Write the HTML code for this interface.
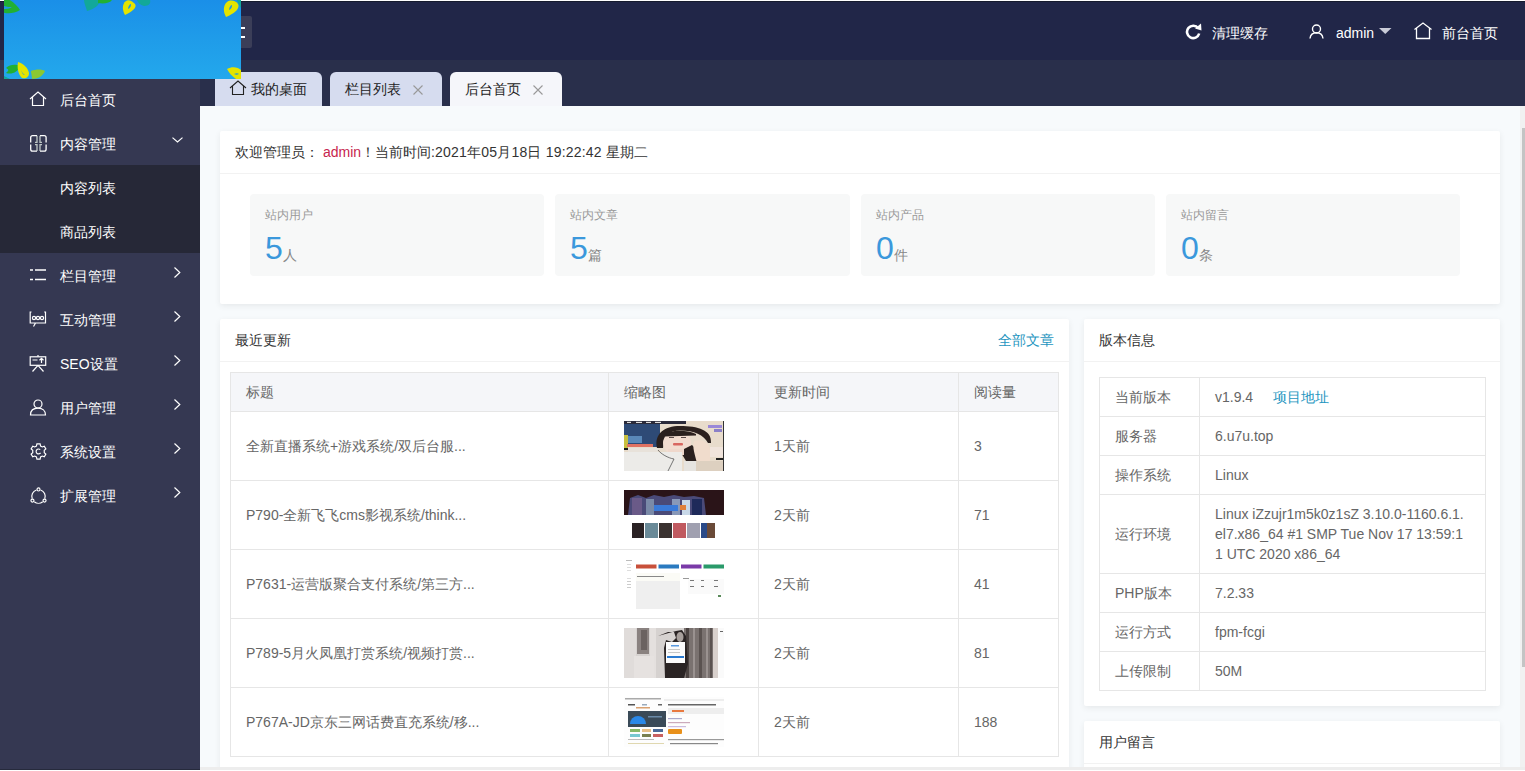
<!DOCTYPE html>
<html><head><meta charset="utf-8">
<style>
*{margin:0;padding:0;box-sizing:border-box}
html,body{width:1525px;height:771px;overflow:hidden;font-family:"Liberation Sans",sans-serif;font-size:14px;color:#333;background:#f7fafc;position:relative}
.abs{position:absolute}
#header{left:0;top:0;width:1525px;height:60px;background:#212648}
#topline{left:0;top:0;width:1525px;height:1px;background:#fff}
#topline2{left:0;top:1px;width:1525px;height:1px;background:#161b2e}
#tabbar{left:200px;top:60px;width:1325px;height:46px;background:#292f4b}
#side{left:0;top:60px;width:200px;height:711px;background:#353852}
#logo{left:4px;top:0;width:237px;height:79px;overflow:hidden;z-index:5}
#burger{left:215px;top:16px;width:37px;height:32px;background:#3b3e58;border-radius:2px}
.menu{position:absolute;left:0;width:200px;height:44px;color:#fff;font-size:14px;line-height:44px}
.menu .t{position:absolute;left:60px;top:1px}
.menu svg{position:absolute;overflow:visible}
.sub{background:#262837}
.hdr-item{position:absolute;color:#fff;font-size:14px;line-height:20px}
.tab{position:absolute;top:72px;height:34px;background:#d6dcef;border-radius:6px 6px 0 0;font-size:14px;line-height:34px;color:#222}
.tab.active{background:#f5f6fa}
.tab .x{position:absolute;top:13px;width:10px;height:10px}
.card{position:absolute;background:#fff;border-radius:2px;box-shadow:0 2px 6px 0 rgba(0,0,0,.07)}
.card-h{position:absolute;left:0;top:0;right:0;height:43px;line-height:42px;padding-left:15px;border-bottom:1px solid #f2f2f2;color:#333;font-size:14px}
.stat{position:absolute;top:194px;height:82px;background:#f7f8f8;border-radius:4px}
.stat .l{position:absolute;left:15px;top:13px;font-size:12px;color:#999;line-height:16px}
.stat .n{position:absolute;left:15px;top:36px;font-size:32px;color:#3b98dc;line-height:36px}
.stat .n span{font-size:14px;color:#888;position:relative;top:1px}
.hl{position:absolute;height:1px;background:#e6e6e6}
.vl{position:absolute;width:1px;background:#e6e6e6}
.td{position:absolute;color:#666;font-size:14px;line-height:20px;white-space:nowrap}
.th{position:absolute;color:#666;font-size:14px;line-height:20px;white-space:nowrap}
.thumb{position:absolute;width:100px;height:50px;overflow:hidden;display:block}
</style></head>
<body>
<div id="header" class="abs"></div>
<div id="topline" class="abs"></div>
<div id="topline2" class="abs"></div>
<div id="tabbar" class="abs"></div>
<div id="side" class="abs"></div>
<div id="burger" class="abs"></div>
<div class="abs" style="left:236px;top:27px;width:8.5px;height:1.6px;background:#fff"></div>
<div class="abs" style="left:236px;top:36px;width:8.5px;height:1.6px;background:#fff"></div>

<!-- logo -->
<svg id="logo" class="abs" width="237" height="79" viewBox="0 0 237 79">
  <defs>
    <linearGradient id="lg" x1="0" y1="0" x2="0" y2="1">
      <stop offset="0" stop-color="#1a8fe8"/>
      <stop offset="0.5" stop-color="#1f9ce9"/>
      <stop offset="1" stop-color="#23a8ec"/>
    </linearGradient>
  </defs>
  <rect width="237" height="79" fill="url(#lg)"/>
  <!-- top-left green leaf -->
  <path d="M-2,-2 C6,-2 12,4 16,10 C10,14 2,14 -2,12 Z" fill="#22b033"/>
  <path d="M0,6 C3,7 6,7 8,7 C5,9 2,9 0,9Z" fill="#1f98e0"/>
  <!-- top middle cluster -->
  <path d="M80,0 L96,0 C96,5 90,9 83,11 C82,7 80,3 80,0Z" fill="#12a89a"/>
  <path d="M94,0 L108,0 C106,3 100,4 94,3Z" fill="#22b033"/>
  <path d="M121,15 C118,10 118,4 122,1 C125,-1 129,2 131,4 C133,7 130,11 121,15Z" fill="#e4e400"/>
  <path d="M124,9 C124,6 126,4 127,4 C127,7 126,8 124,9Z" fill="#1f98e0"/>
  <path d="M133,0 L146,0 C147,3 145,6 140,6 C136,5 134,3 133,0Z" fill="#12a89a"/>
  <!-- top-right yellow leaf -->
  <path d="M222,17 C219,12 219,5 223,2 C227,-1 232,1 234,4 C236,8 232,13 222,17Z" fill="#e4e400"/>
  <path d="M225,10 C225,7 227,5 228,5 C228,8 227,9 225,10Z" fill="#1f98e0"/>
  <path d="M233,0 L237,0 L237,8 C235,5 234,3 233,0Z" fill="#12a89a"/>
  <!-- bottom-left cluster -->
  <path d="M2,68 C6,64 12,64 16,66 C14,72 8,75 2,73 C4,71 6,70 2,68Z" fill="#22b033"/>
  <path d="M14,62 C20,64 24,68 25,73 C25,77 22,79 18,78 C14,74 13,68 14,62Z" fill="#e4e400"/>
  <path d="M17,70 C18,72 19,74 21,75 C19,75 18,73 17,70Z" fill="#1f98e0"/>
  <path d="M27,71 C32,69 38,69 41,71 C39,76 34,79 28,79 C28,76 27,73 27,71Z" fill="#8bc832"/>
  <path d="M0,76 L6,79 L0,79Z" fill="#12a89a"/>
  <!-- bottom-right yellow leaf -->
  <path d="M223,69 C228,66 234,67 237,70 L237,79 L232,79 C228,76 225,73 223,69Z" fill="#e4e400"/>
  <path d="M230,74 C232,73 234,73 235,74 C233,75 232,75 230,74Z" fill="#1f98e0"/>
</svg>

<!-- header right -->
<svg class="abs" style="left:1185px;top:23px" width="17" height="17" viewBox="0 0 17 17">
  <path d="M13.2,5.2 A6.2,6.2 0 1 0 14.2,10.5" fill="none" stroke="#fff" stroke-width="2.6"/>
  <path d="M10,5.5 L16,0.5 L16.5,7.5 Z" fill="#fff"/>
</svg>
<div class="hdr-item" style="left:1212px;top:23px">清理缓存</div>
<svg class="abs" style="left:1309px;top:24px" width="16" height="16" viewBox="0 0 16 16">
  <circle cx="7.5" cy="5" r="4" fill="none" stroke="#fff" stroke-width="1.4"/>
  <path d="M1,14.5 C1.5,10.5 4,8.8 7.5,8.8 C11,8.8 13.5,10.5 14,14.5" fill="none" stroke="#fff" stroke-width="1.4"/>
</svg>
<div class="hdr-item" style="left:1336px;top:23px">admin</div>
<svg class="abs" style="left:1379px;top:28px" width="13" height="7" viewBox="0 0 13 7"><path d="M0,0 L12.5,0 L6.25,6Z" fill="#c9cbd8"/></svg>
<svg class="abs" style="left:1413px;top:22px" width="20" height="18" viewBox="0 0 20 18">
  <path d="M1.5,7.5 L10,1 L18.5,7.5" fill="none" stroke="#fff" stroke-width="1.3"/>
  <path d="M3.5,6 L3.5,16.5 L16.5,16.5 L16.5,6" fill="none" stroke="#fff" stroke-width="1.3"/>
</svg>
<div class="hdr-item" style="left:1442px;top:23px">前台首页</div>

<!-- sidebar -->
<div class="menu" style="top:77px"><svg style="left:29px;top:14px" width="18" height="16" viewBox="0 0 18 16"><path d="M1,8 L9,1 L17,8" fill="none" stroke="#fff" stroke-width="1.2"/><path d="M3.5,6 L3.5,14.5 L14.5,14.5 L14.5,6" fill="none" stroke="#fff" stroke-width="1.2"/></svg><span class="t">后台首页</span></div>
<div class="menu" style="top:121px"><svg style="left:30px;top:14px" width="17" height="17" viewBox="0 0 17 17"><g fill="none" stroke-width="1.3"><path d="M0.7,7.5 L0.7,2.6 Q0.7,0.7 2.6,0.7 L7,0.7 M10,0.7 L14.2,0.7 Q16.1,0.7 16.1,2.6 L16.1,7.5 M0.7,9.6 L0.7,14.2 Q0.7,16.1 2.6,16.1 L7,16.1 M10,16.1 L14.2,16.1 Q16.1,16.1 16.1,14.2 L16.1,9.6" stroke="#fff"/><path d="M7,0.7 L7,7.3 L5,7.3 M10,0.7 L10,7.3 L12,7.3 M7,16.1 L7,9.6 L5,9.6 M10,16.1 L10,9.6 L12,9.6" stroke="#e2ece4" stroke-opacity="0.8"/></g></svg><span class="t">内容管理</span>
  <svg style="left:172px;top:16px" width="11" height="7" viewBox="0 0 11 7"><path d="M0.5,0.6 L5.5,5 L10.5,0.6" fill="none" stroke="#fff" stroke-width="1.2"/></svg></div>
<div class="menu sub" style="top:165px"><span class="t">内容列表</span></div>
<div class="menu sub" style="top:209px"><span class="t">商品列表</span></div>
<div class="menu" style="top:253px"><svg style="left:30px;top:16px" width="17" height="11" viewBox="0 0 17 11"><g stroke="#fff" stroke-width="1.3"><path d="M0,1 L3,1 M5,1 L16,1 M0,10.5 L3,10.5 M5,10.5 L16,10.5"/></g></svg><span class="t">栏目管理</span>
  <svg style="left:174px;top:14px" width="7" height="11" viewBox="0 0 7 11"><path d="M0.5,0.5 L5.8,5.5 L0.5,10.5" fill="none" stroke="#fff" stroke-width="1.2"/></svg></div>
<div class="menu" style="top:297px"><svg style="left:29px;top:14px" width="18" height="17" viewBox="0 0 18 17"><g fill="none" stroke="#fff" stroke-width="1.2"><path d="M2.5,1 L1.2,1 L1.2,12 L6.5,12 L4.5,15.5 M6.5,12 L16.5,12 L16.5,1 L15.2,1"/><circle cx="5" cy="7" r="1.6"/><circle cx="9" cy="7" r="1.6"/><circle cx="13" cy="7" r="1.6"/></g></svg><span class="t">互动管理</span>
  <svg style="left:174px;top:14px" width="7" height="11" viewBox="0 0 7 11"><path d="M0.5,0.5 L5.8,5.5 L0.5,10.5" fill="none" stroke="#fff" stroke-width="1.2"/></svg></div>
<div class="menu" style="top:341px"><svg style="left:29px;top:14px" width="18" height="17" viewBox="0 0 18 17"><g fill="none" stroke="#fff" stroke-width="1.2"><rect x="1.2" y="1.8" width="15.5" height="8.5"/><path d="M9,0 L9,1.8 M3.5,5 L8.5,5 M12.5,8 L12.5,3.5 M10.5,5.2 L12.5,3.3 L14.5,5.2 M9,10.3 L3.5,16.5 M9,10.3 L14.5,16.5"/></g></svg><span class="t">SEO设置</span>
  <svg style="left:174px;top:14px" width="7" height="11" viewBox="0 0 7 11"><path d="M0.5,0.5 L5.8,5.5 L0.5,10.5" fill="none" stroke="#fff" stroke-width="1.2"/></svg></div>
<div class="menu" style="top:385px"><svg style="left:29px;top:14px" width="18" height="17" viewBox="0 0 18 17"><g fill="none" stroke="#fff" stroke-width="1.2"><circle cx="9" cy="5" r="4"/><path d="M1.5,16 C1.5,11.5 4.5,9.2 9,9.2 C13.5,9.2 16.5,11.5 16.5,16 Z"/></g></svg><span class="t">用户管理</span>
  <svg style="left:174px;top:14px" width="7" height="11" viewBox="0 0 7 11"><path d="M0.5,0.5 L5.8,5.5 L0.5,10.5" fill="none" stroke="#fff" stroke-width="1.2"/></svg></div>
<div class="menu" style="top:429px"><svg style="left:29.5px;top:14px" width="17" height="17" viewBox="0 0 18 18"><g fill="none" stroke="#fff" stroke-width="1.25"><path d="M7.3,1 L10.7,1 L11.2,3.2 L13,4.2 L15.1,3.4 L16.8,6.3 L15.1,7.8 L15.1,10.2 L16.8,11.7 L15.1,14.6 L13,13.8 L11.2,14.8 L10.7,17 L7.3,17 L6.8,14.8 L5,13.8 L2.9,14.6 L1.2,11.7 L2.9,10.2 L2.9,7.8 L1.2,6.3 L2.9,3.4 L5,4.2 L6.8,3.2 Z"/><path d="M10.8,7 A2.6,2.6 0 1 0 11.2,10.5"/></g></svg><span class="t">系统设置</span>
  <svg style="left:174px;top:14px" width="7" height="11" viewBox="0 0 7 11"><path d="M0.5,0.5 L5.8,5.5 L0.5,10.5" fill="none" stroke="#fff" stroke-width="1.2"/></svg></div>
<div class="menu" style="top:473px"><svg style="left:29.5px;top:14px" width="17" height="17" viewBox="0 0 18 18"><g fill="none" stroke="#fff" stroke-width="1.25"><path d="M6.8,3.2 A7,7 0 0 0 2.4,12.5 M4.5,15.6 A7,7 0 0 0 13.5,15.6 M15.6,12.5 A7,7 0 0 0 11.2,3.2"/><circle cx="9" cy="2.6" r="1.6"/><circle cx="2.6" cy="14.4" r="1.6"/><circle cx="15.4" cy="14.4" r="1.6"/></g></svg><span class="t">扩展管理</span>
  <svg style="left:174px;top:14px" width="7" height="11" viewBox="0 0 7 11"><path d="M0.5,0.5 L5.8,5.5 L0.5,10.5" fill="none" stroke="#fff" stroke-width="1.2"/></svg></div>

<!-- tabs -->
<div class="tab" style="left:215px;width:107px">
  <svg class="abs" style="left:14px;top:8px" width="18" height="16" viewBox="0 0 18 16"><path d="M1,8 L9,1 L17,8" fill="none" stroke="#222" stroke-width="1.1"/><path d="M3.5,6 L3.5,14.5 L14.5,14.5 L14.5,6" fill="none" stroke="#222" stroke-width="1.1"/></svg>
  <span style="position:absolute;left:36px">我的桌面</span></div>
<div class="tab" style="left:330px;width:112px"><span style="position:absolute;left:15px">栏目列表</span>
  <svg class="x" style="left:83px" viewBox="0 0 10 10"><path d="M0.5,0.5 L9.5,9.5 M9.5,0.5 L0.5,9.5" stroke="#999" stroke-width="1.1"/></svg></div>
<div class="tab active" style="left:450px;width:112px"><span style="position:absolute;left:15px">后台首页</span>
  <svg class="x" style="left:83px" viewBox="0 0 10 10"><path d="M0.5,0.5 L9.5,9.5 M9.5,0.5 L0.5,9.5" stroke="#999" stroke-width="1.1"/></svg></div>

<!-- card 1 -->
<div class="card" style="left:220px;top:131px;width:1280px;height:173px">
  <div class="card-h">欢迎管理员： <span style="color:#c7254e">admin</span>！当前时间<span style="letter-spacing:0.2px">:2021年05月18日 19:22:42 星期二</span></div>
</div>
<div class="stat" style="left:250px;width:294px"><div class="l">站内用户</div><div class="n">5<span>人</span></div></div>
<div class="stat" style="left:555px;width:295px"><div class="l">站内文章</div><div class="n">5<span>篇</span></div></div>
<div class="stat" style="left:861px;width:294px"><div class="l">站内产品</div><div class="n">0<span>件</span></div></div>
<div class="stat" style="left:1166px;width:294px"><div class="l">站内留言</div><div class="n">0<span>条</span></div></div>

<!-- card 2 -->
<div class="card" style="left:220px;top:319px;width:849px;height:452px">
  <div class="card-h">最近更新<span style="position:absolute;right:15px;color:#1e95c0">全部文章</span></div>
</div>
<!-- table 1 -->
<div class="abs" style="left:231px;top:373px;width:827px;height:38px;background:#f5f6f9"></div>
<div class="hl" style="left:230px;top:372px;width:829px"></div>
<div class="hl" style="left:230px;top:411px;width:829px"></div>
<div class="hl" style="left:230px;top:480px;width:829px"></div>
<div class="hl" style="left:230px;top:549px;width:829px"></div>
<div class="hl" style="left:230px;top:618px;width:829px"></div>
<div class="hl" style="left:230px;top:687px;width:829px"></div>
<div class="hl" style="left:230px;top:756px;width:829px"></div>
<div class="vl" style="left:230px;top:372px;height:385px"></div>
<div class="vl" style="left:608px;top:372px;height:385px"></div>
<div class="vl" style="left:758px;top:372px;height:385px"></div>
<div class="vl" style="left:958px;top:372px;height:385px"></div>
<div class="vl" style="left:1058px;top:372px;height:385px"></div>
<div class="th" style="left:246px;top:382px">标题</div>
<div class="th" style="left:624px;top:382px">缩略图</div>
<div class="th" style="left:774px;top:382px">更新时间</div>
<div class="th" style="left:974px;top:382px">阅读量</div>

<div class="td" style="left:246px;top:436px">全新直播系统+游戏系统/双后台服...</div>
<div class="td" style="left:774px;top:436px">1天前</div>
<div class="td" style="left:974px;top:436px">3</div>
<div class="td" style="left:246px;top:505px">P790-全新飞飞cms影视系统/think...</div>
<div class="td" style="left:774px;top:505px">2天前</div>
<div class="td" style="left:974px;top:505px">71</div>
<div class="td" style="left:246px;top:574px">P7631-运营版聚合支付系统/第三方...</div>
<div class="td" style="left:774px;top:574px">2天前</div>
<div class="td" style="left:974px;top:574px">41</div>
<div class="td" style="left:246px;top:643px">P789-5月火凤凰打赏系统/视频打赏...</div>
<div class="td" style="left:774px;top:643px">2天前</div>
<div class="td" style="left:974px;top:643px">81</div>
<div class="td" style="left:246px;top:712px">P767A-JD京东三网话费直充系统/移...</div>
<div class="td" style="left:774px;top:712px">2天前</div>
<div class="td" style="left:974px;top:712px">188</div>

<!-- thumbs -->
<svg class="thumb" style="left:624px;top:421px" width="100" height="50" viewBox="0 0 100 50">
  <rect width="100" height="50" fill="#e8dccc"/>
  <rect x="0" y="0" width="36" height="26" fill="#2e4a76"/>
  <rect x="0" y="0" width="62" height="3" fill="#2a2a3a"/>
  <rect x="3" y="0.8" width="4" height="1.2" fill="#ddd"/><rect x="12" y="0.8" width="6" height="1.2" fill="#ddd"/><rect x="22" y="0.8" width="5" height="1.2" fill="#ddd"/><rect x="31" y="0.8" width="6" height="1.2" fill="#ddd"/>
  <rect x="0" y="14" width="4" height="14" fill="#c8c040"/>
  <rect x="4" y="15" width="14" height="7" fill="#5a88b8"/>
  <rect x="3" y="23" width="26" height="3" fill="#e07262"/>
  <rect x="0" y="27" width="4" height="2" fill="#1a1a1a"/>
  <rect x="84" y="4" width="14" height="3" fill="#9a88d8"/><rect x="90" y="8" width="8" height="3" fill="#8a80c8"/>
  <path d="M33,27 C30,13 40,5 56,5 C74,5 88,9 87,22 L84,22 C80,14 70,9.5 56,9.5 C46,9.5 40,15 39,27 Z" fill="#2a201e"/>
  <ellipse cx="53" cy="22" rx="14" ry="12" fill="#f2dcd0"/>
  <path d="M40,14 C44,9 62,8 72,13 L72,14.5 L40,15.5Z" fill="#2a201e"/><rect x="45" y="16" width="5" height="1" fill="#5a4a48"/><rect x="57" y="16" width="5" height="1" fill="#5a4a48"/>
  <rect x="49" y="22" width="10" height="2.5" rx="1" fill="#d86660"/>
  <path d="M56,30 L68,24 L74,30 L74,40 L62,40 Z" fill="#2a201e"/>
  <path d="M70,20 C77,18 84,20 86,28 L86,40 L73,42 C71,34 68,26 70,20Z" fill="#f0dccc"/>
  <rect x="44" y="28" width="16" height="6" fill="#efd8cc"/><rect x="0" y="31" width="58" height="19" fill="#ecebe8"/><rect x="4" y="27" width="30" height="4" fill="#e8e2da"/>
  <rect x="60" y="40" width="12" height="10" fill="#e6e4e0"/>
  <path d="M34,29 C37,33 44,37 50,38 L44,50" fill="none" stroke="#555" stroke-width="0.8"/>
  <rect x="86" y="26" width="14" height="10" fill="#f0e4dc"/>
  <rect x="92" y="37" width="8" height="2" fill="#222"/>
  <rect x="72" y="40" width="28" height="10" fill="#ddd0c0"/>
  <rect x="99" y="0" width="1" height="50" fill="#333"/>
</svg>
<svg class="thumb" style="left:624px;top:490px" width="100" height="50" viewBox="0 0 100 50">
  <rect width="100" height="50" fill="#fff"/>
  <rect x="0" y="0" width="100" height="25" fill="#2a1418"/>
  <path d="M4,25 L6,8 L14,5 L22,8 L30,5 L40,7 L50,5 L60,7 L70,6 L80,8 L82,25 Z" fill="#4a4a78"/>
  <rect x="8" y="8" width="10" height="17" fill="#6a5a88"/>
  <rect x="22" y="9" width="8" height="16" fill="#7a8aa8"/>
  <rect x="48" y="9" width="8" height="16" fill="#8898b8"/>
  <rect x="58" y="10" width="8" height="15" fill="#c8d8e8"/>
  <rect x="68" y="9" width="10" height="16" fill="#1e2a5a"/>
  <rect x="30" y="15" width="24" height="6" fill="#3a7ad8"/>
  <rect x="56" y="15" width="6" height="5" fill="#e0803a"/>
  <rect x="8" y="33" width="12" height="15" fill="#2a2224"/>
  <rect x="21" y="33" width="13" height="15" fill="#6a8a98"/>
  <rect x="35" y="33" width="13" height="15" fill="#3a3230"/>
  <rect x="49" y="33" width="13" height="15" fill="#c05a60"/>
  <rect x="63" y="33" width="13" height="15" fill="#a0a0b0"/>
  <rect x="77" y="33" width="6" height="15" fill="#2a4a88"/>
  <rect x="83" y="33" width="8" height="15" fill="#6a4a38"/>
</svg>
<svg class="thumb" style="left:624px;top:559px" width="100" height="50" viewBox="0 0 100 50">
  <rect width="100" height="50" fill="#fff"/>
  <rect x="2" y="1" width="6" height="1" fill="#bbb"/>
  <rect x="3" y="5" width="4" height="1" fill="#ddd"/><rect x="3" y="8" width="4" height="1" fill="#ddd"/><rect x="3" y="11" width="4" height="1" fill="#ddd"/>
  <rect x="3" y="19" width="4" height="1" fill="#ddd"/><rect x="3" y="22" width="4" height="1" fill="#ccc"/><rect x="3" y="25" width="4" height="1" fill="#ccc"/><rect x="3" y="28" width="4" height="1" fill="#ccc"/>
  <rect x="12" y="5.5" width="20.5" height="4" fill="#c8503a"/>
  <rect x="34.5" y="5.5" width="20.5" height="4" fill="#2a7ac0"/>
  <rect x="57" y="5.5" width="20.5" height="4" fill="#7a3aa8"/>
  <rect x="79.5" y="5.5" width="20.5" height="4" fill="#2a9a6a"/>
  <rect x="12" y="14" width="44" height="36" fill="#efefef"/>
  <rect x="12" y="14" width="44" height="8" fill="#fbfbf6"/>
  <rect x="13" y="17" width="27" height="1" fill="#888"/>
  <rect x="59" y="19" width="6" height="1" fill="#999"/>
  <rect x="64" y="20" width="36" height="15" fill="#fafafa"/>
  <rect x="66" y="21" width="4" height="1" fill="#777"/><rect x="77" y="21" width="3" height="1" fill="#777"/><rect x="90" y="21" width="4" height="1" fill="#777"/>
  <rect x="66" y="27" width="4" height="1" fill="#777"/><rect x="77" y="27" width="3" height="1" fill="#777"/><rect x="90" y="27" width="4" height="1" fill="#777"/>
  <rect x="94" y="36" width="3" height="2" fill="#5a8a5a"/>
</svg>
<svg class="thumb" style="left:624px;top:628px" width="100" height="50" viewBox="0 0 100 50">
  <rect width="100" height="50" fill="#fafafa"/>
  <rect x="0" y="0" width="94" height="50" fill="#d6d2d0"/>
  <rect x="0" y="0" width="12" height="50" fill="#e0dcda"/>
  <rect x="13" y="0" width="12" height="26" fill="#8a8280"/>
  <rect x="17" y="2" width="6" height="20" fill="#6a6260"/>
  <rect x="26" y="0" width="6" height="50" fill="#e4e0de"/>
  <rect x="10" y="28" width="20" height="22" fill="#e6e2e0"/>
  <rect x="60" y="0" width="32" height="50" fill="#7a7270"/>
  <rect x="62" y="0" width="3" height="50" fill="#4a4240"/><rect x="69" y="0" width="2" height="50" fill="#9a9290"/><rect x="75" y="0" width="3" height="50" fill="#5a5250"/><rect x="82" y="0" width="2" height="50" fill="#9a9290"/><rect x="86" y="0" width="2" height="50" fill="#5a5250"/>
  <rect x="89" y="0" width="5" height="50" fill="#d8d0cc"/>
  <path d="M34,8 L44,4 L50,4 L52,10 L48,14 L42,12 L40,20 L41,50 L60,50 L64,36 L62,8 L58,2 L52,3 Z" fill="#2a2424"/>
  <ellipse cx="56" cy="9" rx="3.5" ry="5" fill="#a8a09c"/>
  <rect x="42" y="14" width="19" height="21" fill="#fbfbfb"/>
  <rect x="47" y="17" width="8" height="1.5" fill="#5a9ae0"/>
  <rect x="44" y="21" width="12" height="0.8" fill="#bbb"/><rect x="44" y="24" width="12" height="0.8" fill="#bbb"/>
  <rect x="43" y="28" width="17" height="2" fill="#2a7ad0"/>
  <rect x="96" y="3" width="3" height="1" fill="#666"/>
</svg>
<svg class="thumb" style="left:624px;top:697px" width="100" height="50" viewBox="0 0 100 50">
  <rect width="100" height="50" fill="#fdfdfd"/>
  <rect x="1" y="1" width="36" height="1.5" fill="#aaa"/>
  <rect x="40" y="2" width="60" height="2" fill="#eee"/>
  <rect x="4" y="7" width="7" height="1.5" fill="#555"/><rect x="18" y="7" width="5" height="1.5" fill="#9ab"/><rect x="34" y="7" width="4" height="1.5" fill="#666"/>
  <rect x="12" y="10" width="14" height="1.5" fill="#d8a070"/>
  <rect x="4" y="14" width="38" height="16" fill="#3a4a58"/>
  <path d="M6,27 A8,8 0 0 1 22,27 Z" fill="#2a88e8"/>
  <rect x="24" y="19" width="14" height="1.5" fill="#6a8aa8"/>
  <rect x="6" y="32" width="10" height="3" fill="#88b868"/><rect x="18" y="32" width="9" height="3" fill="#e8c088"/><rect x="29" y="32" width="10" height="3" fill="#4a6a98"/>
  <rect x="6" y="37" width="10" height="3" fill="#78c8d0"/><rect x="18" y="37" width="9" height="3" fill="#7a8050"/><rect x="29" y="37" width="10" height="3" fill="#c86060"/>
  <rect x="4" y="42" width="26" height="1" fill="#bbb"/>
  <rect x="4" y="46" width="36" height="1" fill="#e0d8b0"/>
  <rect x="44" y="7" width="48" height="1.5" fill="#666"/>
  <rect x="44" y="11" width="56" height="6" fill="#eee"/>
  <rect x="48" y="13" width="12" height="2" fill="#e87a40"/>
  <rect x="44" y="21" width="14" height="1.2" fill="#aac"/><rect x="44" y="25" width="22" height="1.2" fill="#cab"/><rect x="44" y="29" width="18" height="1.2" fill="#cbd"/>
  <rect x="44" y="32" width="14" height="5" rx="1" fill="#e8901a"/>
  <rect x="44" y="42" width="56" height="1.2" fill="#999"/><rect x="46" y="46" width="48" height="1.2" fill="#888"/>
</svg>

<!-- card 3 -->
<div class="card" style="left:1084px;top:319px;width:416px;height:387px">
  <div class="card-h">版本信息</div>
</div>
<div class="hl" style="left:1099px;top:377px;width:387px"></div>
<div class="hl" style="left:1099px;top:416px;width:387px"></div>
<div class="hl" style="left:1099px;top:455px;width:387px"></div>
<div class="hl" style="left:1099px;top:494px;width:387px"></div>
<div class="hl" style="left:1099px;top:573px;width:387px"></div>
<div class="hl" style="left:1099px;top:612px;width:387px"></div>
<div class="hl" style="left:1099px;top:651px;width:387px"></div>
<div class="hl" style="left:1099px;top:690px;width:387px"></div>
<div class="vl" style="left:1099px;top:377px;height:314px"></div>
<div class="vl" style="left:1199px;top:377px;height:314px"></div>
<div class="vl" style="left:1485px;top:377px;height:314px"></div>
<div class="td" style="left:1115px;top:387px">当前版本</div>
<div class="td" style="left:1215px;top:387px">v1.9.4 <span style="margin-left:16px;color:#1e95c0">项目地址</span></div>
<div class="td" style="left:1115px;top:426px">服务器</div>
<div class="td" style="left:1215px;top:426px">6.u7u.top</div>
<div class="td" style="left:1115px;top:465px">操作系统</div>
<div class="td" style="left:1215px;top:465px">Linux</div>
<div class="td" style="left:1115px;top:524px">运行环境</div>
<div class="td" style="left:1215px;top:504px;white-space:normal;width:260px">Linux iZzujr1m5k0z1sZ 3.10.0-1160.6.1.<br>el7.x86_64 #1 SMP Tue Nov 17 13:59:1<br>1 UTC 2020 x86_64</div>
<div class="td" style="left:1115px;top:583px">PHP版本</div>
<div class="td" style="left:1215px;top:583px">7.2.33</div>
<div class="td" style="left:1115px;top:622px">运行方式</div>
<div class="td" style="left:1215px;top:622px">fpm-fcgi</div>
<div class="td" style="left:1115px;top:661px">上传限制</div>
<div class="td" style="left:1215px;top:661px">50M</div>

<!-- card 4 -->
<div class="card" style="left:1084px;top:721px;width:416px;height:60px">
  <div class="card-h">用户留言</div>
</div>

<!-- bottom -->
<div class="abs" style="left:200px;top:767px;width:1325px;height:3px;background:#ededed;z-index:3"></div>
<div class="abs" style="left:0;top:769px;width:200px;height:1px;background:#262a3c;z-index:3"></div>
<div class="abs" style="left:0;top:770px;width:1525px;height:1px;background:#fff;z-index:3"></div>
<!-- scrollbar -->
<div class="abs" style="left:1520px;top:106px;width:5px;height:665px;background:#f1f1f1"></div>
<div class="abs" style="left:1522px;top:128px;width:3px;height:539px;background:#c4c4c4"></div>

</body></html>
